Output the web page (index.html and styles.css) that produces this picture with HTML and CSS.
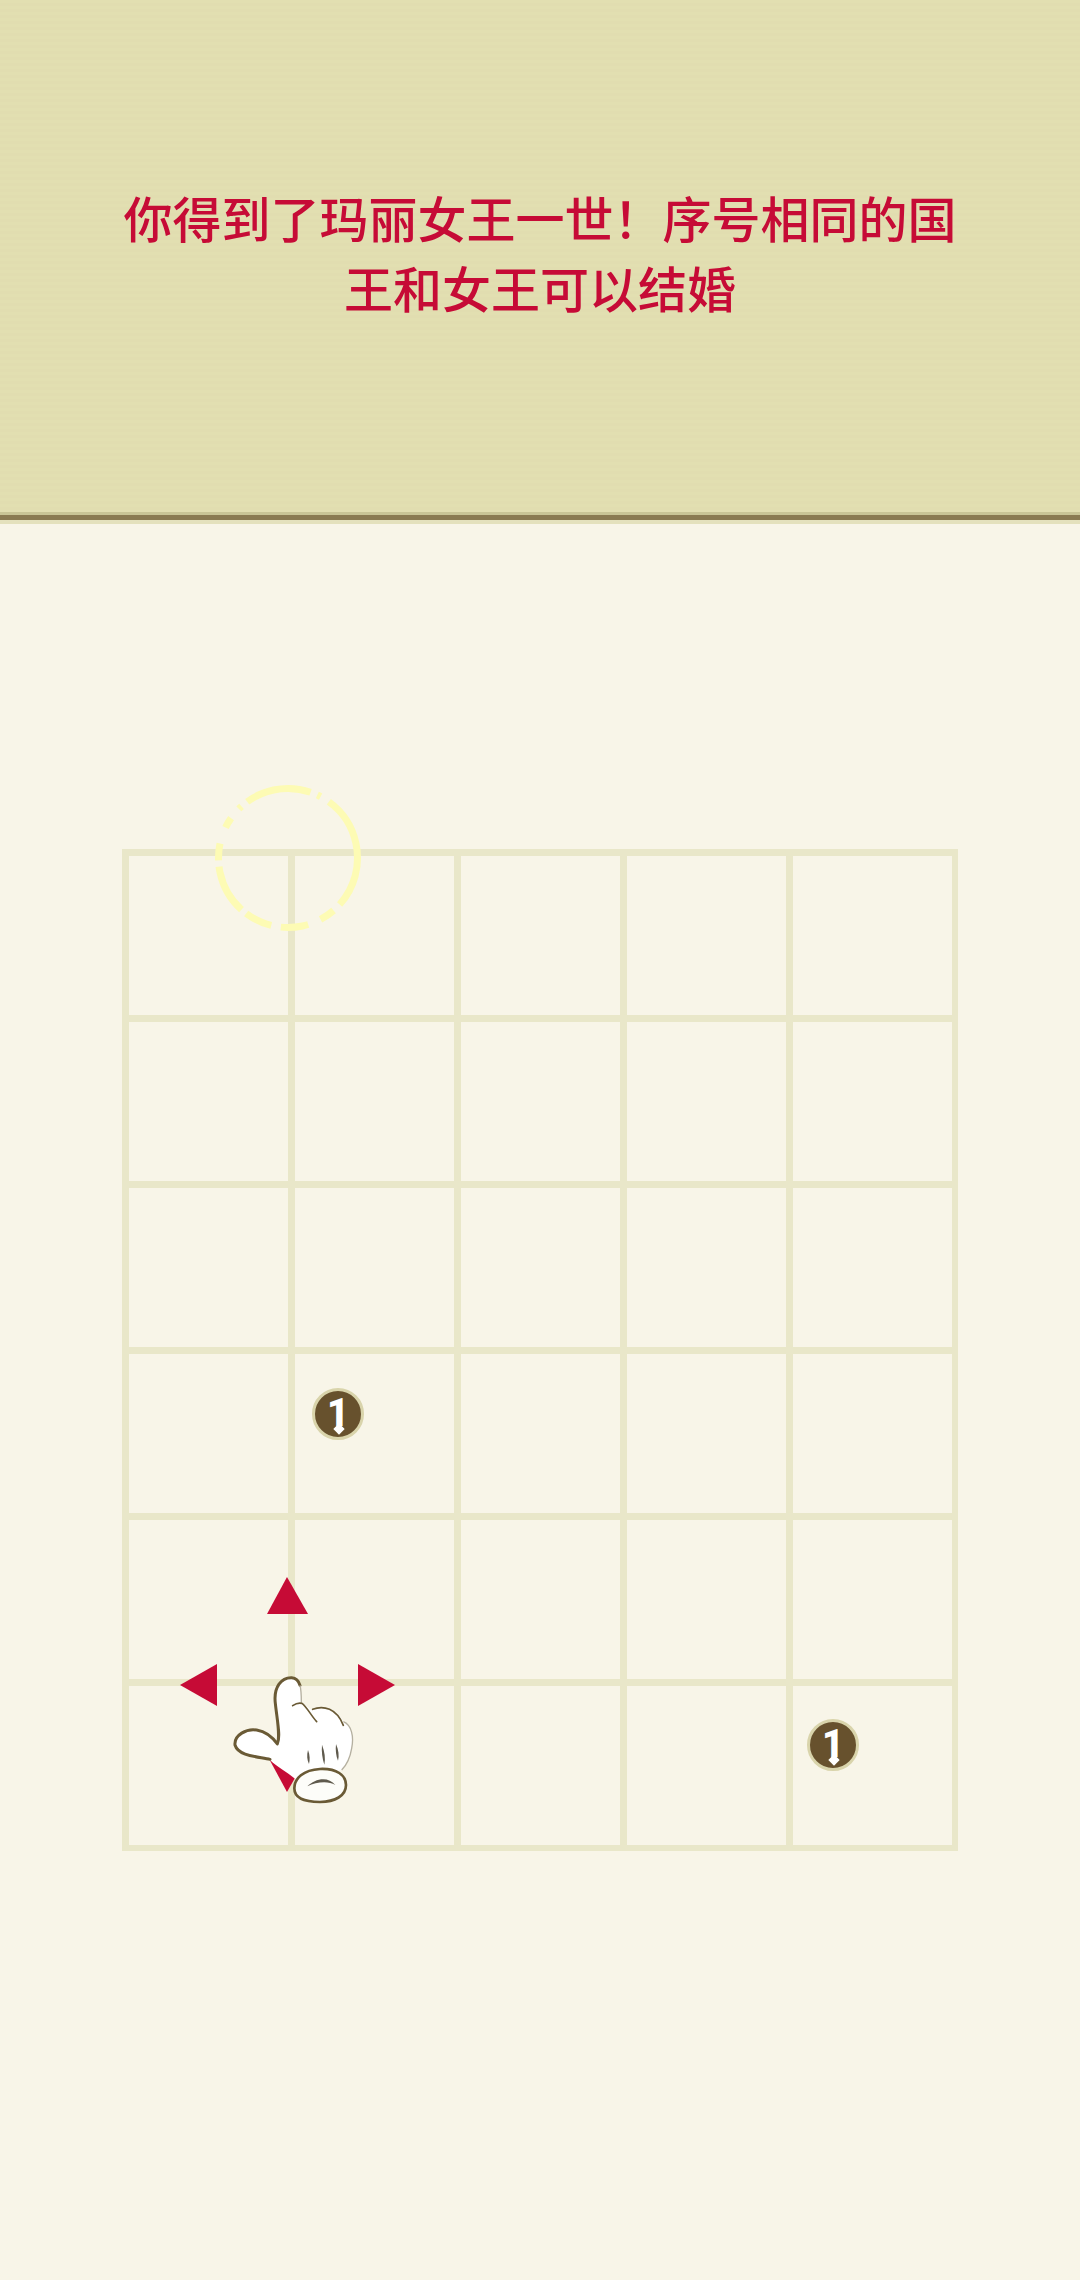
FILE: index.html
```html
<!DOCTYPE html>
<html lang="zh">
<head>
<meta charset="utf-8">
<title>玛丽女王一世</title>
<link rel="stylesheet" href="styles.css">
</head>
<body>
<header class="banner">
  <p class="message">你得到了玛丽女王一世！序号相同的国王和女王可以结婚</p>
</header>
<main class="stage">
  <div class="board">
    <div class="cell"></div><div class="cell"></div><div class="cell"></div><div class="cell"></div><div class="cell"></div>
    <div class="cell"></div><div class="cell"></div><div class="cell"></div><div class="cell"></div><div class="cell"></div>
    <div class="cell"></div><div class="cell"></div><div class="cell"></div><div class="cell"></div><div class="cell"></div>
    <div class="cell"></div><div class="cell"><span class="token token-a">1</span></div><div class="cell"></div><div class="cell"></div><div class="cell"></div>
    <div class="cell"></div><div class="cell"></div><div class="cell"></div><div class="cell"></div><div class="cell"></div>
    <div class="cell"></div><div class="cell"></div><div class="cell"></div><div class="cell"></div><div class="cell"><span class="token token-b">1</span></div>

    <svg class="ring" viewBox="0 0 160 160" aria-hidden="true">
      <circle class="ring-dash" cx="80" cy="80" r="69.5" pathLength="360" transform="rotate(258 80 80)"/>
    </svg>

    <svg class="arrows" viewBox="0 0 260 280" aria-hidden="true">
      <polygon class="arrow" points="127,37 107,74 148,74"/>
      <polygon class="arrow" points="20,145 57,124 57,166"/>
      <polygon class="arrow" points="235,145 198,124 198,166"/>
      <polygon class="arrow" points="127,252 107,215 148,215"/>
    </svg>

    <svg class="hand" viewBox="0 0 780 840" aria-hidden="true">
      <path class="hand-fill" d="M352 612C362 590 352 545 346 490C340 440 365 412 395 413C418 414 423 445 424 488C440 495 450 510 458 508C490 495 530 505 550 545C575 555 582 590 575 625C570 655 560 675 545 690L405 716C380 695 350 680 330 660C300 650 235 650 225 615C222 585 260 565 290 570C320 575 340 595 352 612Z"/>
      <path class="hand-line" d="M330 658C300 650 235 650 225 615C222 585 260 565 290 570C320 575 340 595 352 612C362 590 352 545 346 490C340 440 365 412 395 413C408 414 416 422 420 436"/>
      <path class="hand-soft" d="M420 436C424 450 424 470 424 488M550 545C575 555 582 590 575 625C570 655 560 675 545 690"/>
      <path class="hand-line thin" d="M398 497C408 490 418 488 426 490C440 500 452 525 470 545M458 508C490 495 530 505 550 556"/>
      <path class="hand-mark" d="M444 630C450 645 450 660 447 672C441 660 440 645 444 630ZM486 614C494 635 497 655 493 674C487 655 484 635 486 614ZM528 612C536 630 538 648 534 662C528 648 526 630 528 612Z"/>
      <path class="hand-cuff" d="M403 745C403 715 430 690 480 687C530 685 558 705 558 735C558 768 525 785 480 786C435 786 403 775 403 745Z"/>
      <path class="hand-mark" d="M442 739C465 715 505 708 526 735C505 722 470 725 442 739Z"/>
    </svg>
  </div>
</main>
</body>
</html>
```
FILE: styles.css
```css
* { box-sizing: border-box; }

html, body {
  margin: 0;
  padding: 0;
}

body {
  width: 1080px;
  height: 2280px;
  overflow: hidden;
  background: #f8f5e8;
  font-family: "Noto Sans CJK SC", "Noto Sans", sans-serif;
}

.banner {
  height: 524px;
  padding: 0 120px 20px;
  display: flex;
  align-items: center;
  justify-content: center;
  background:
    linear-gradient(to bottom, transparent 512px, #c9c596 512px, #c9c596 515px, #8a7b52 515px, #8a7b52 520px, #e4e1bd 520px, #e4e1bd 524px),
    repeating-linear-gradient(to bottom, #e2dfb1 0, #e2dfb1 3px, #e1ddb0 3px, #e1ddb0 6px);
}

.message {
  margin: 0;
  width: 838px;
  text-align: center;
  color: #c60b36;
  font-size: 49px;
  line-height: 70px;
  font-weight: 500;
  filter: blur(0.4px);
}

.stage {
  padding: 325px 0 0 122px;
}

.board {
  position: relative;
  width: 836px;
  padding: 7px 6px 6px 7px;
  display: grid;
  grid-template-columns: repeat(5, 159px);
  grid-auto-rows: 159px;
  gap: 7px;
  background: #e9e7c9;
}

.cell {
  position: relative;
  background: #f8f5e8;
}

.token {
  position: absolute;
  width: 52px;
  height: 52px;
  display: flex;
  align-items: center;
  justify-content: center;
  border-radius: 50%;
  border: 3px solid #d9d4ab;
  background: #67512d;
  color: #fff;
  font-family: "Roboto", sans-serif;
  font-weight: 900;
  font-size: 38px;
  line-height: 1;
  padding-bottom: 3px;
}

.token::after {
  content: "";
  position: absolute;
  left: 50%;
  bottom: 4px;
  width: 8px;
  height: 8px;
  margin-left: -3px;
  background: #fff;
  transform: rotate(45deg);
}

.token-a { left: 17px; top: 34px; }
.token-b { left: 14px; top: 33px; }

.ring {
  position: absolute;
  left: 86px;
  top: -71px;
  width: 160px;
  height: 160px;
  overflow: visible;
  filter: blur(0.5px);
}

.ring-dash {
  fill: none;
  stroke: #fdfbb4;
  stroke-width: 7;
  stroke-linecap: butt;
  stroke-dasharray: 31 6 3 8 96 7 13 11 23 8 23 5 41 5 14 14 9 10 3 6 29 5;
  stroke-dashoffset: 0;
}

.arrows,
.hand {
  position: absolute;
  left: 38px;
  top: 691px;
  width: 260px;
  height: 280px;
}

.arrow { fill: #c60b36; }

.hand-fill { fill: #fff; }

.hand-line {
  fill: none;
  stroke: #6a5a35;
  stroke-width: 9;
  stroke-linecap: round;
  stroke-linejoin: round;
}

.hand-line.thin { stroke-width: 5; }

.hand-soft {
  fill: none;
  stroke: #b5b0a0;
  stroke-width: 4;
}

.hand-mark { fill: #5f5a4d; }

.hand-cuff {
  fill: #fdfdf9;
  stroke: #6a5a35;
  stroke-width: 8;
}
```
